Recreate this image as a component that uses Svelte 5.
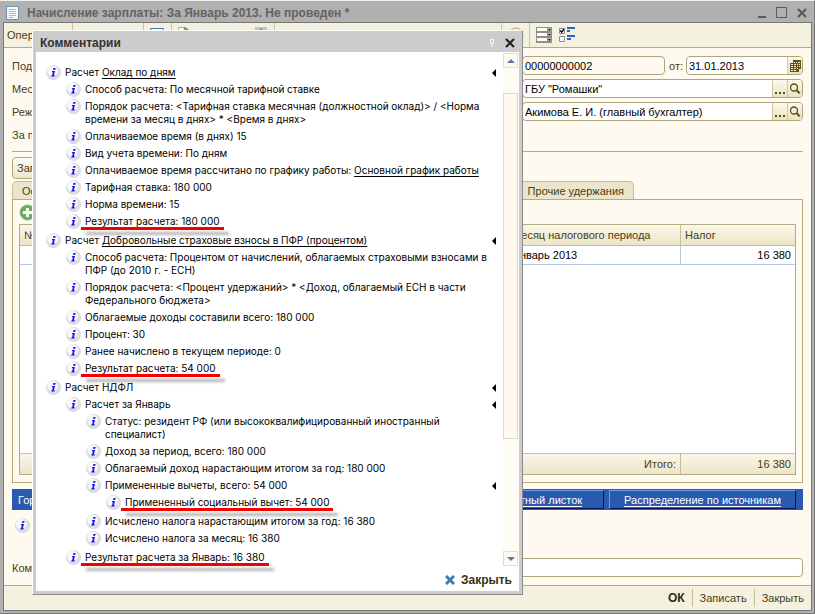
<script lang="ts">
  type Item = { text: string; link?: string; mark?: boolean; children?: Item[] };

  const items: Item[] = [
    {
      text: 'Расчет', link: 'Оклад по дням', children: [
        { text: 'Способ расчета: По месячной тарифной ставке' },
        { text: 'Порядок расчета: <Тарифная ставка месячная (должностной оклад)> / <Норма времени за месяц в днях> * <Время в днях>' },
        { text: 'Оплачиваемое время (в днях) 15' },
        { text: 'Вид учета времени: По дням' },
        { text: 'Оплачиваемое время рассчитано по графику работы:', link: 'Основной график работы' },
        { text: 'Тарифная ставка: 180 000' },
        { text: 'Норма времени: 15' },
        { text: 'Результат расчета: 180 000', mark: true }
      ]
    },
    {
      text: 'Расчет', link: 'Добровольные страховые взносы в ПФР (процентом)', children: [
        { text: 'Способ расчета: Процентом от начислений, облагаемых страховыми взносами в ПФР (до 2010 г. - ЕСН)' },
        { text: 'Порядок расчета: <Процент удержаний> * <Доход, облагаемый ЕСН в части Федерального бюджета>' },
        { text: 'Облагаемые доходы составили всего: 180 000' },
        { text: 'Процент: 30' },
        { text: 'Ранее начислено в текущем периоде: 0' },
        { text: 'Результат расчета: 54 000', mark: true }
      ]
    },
    {
      text: 'Расчет НДФЛ', children: [
        {
          text: 'Расчет за Январь', children: [
            { text: 'Статус: резидент РФ (или высококвалифицированный иностранный специалист)' },
            { text: 'Доход за период, всего: 180 000' },
            { text: 'Облагаемый доход нарастающим итогом за год: 180 000' },
            {
              text: 'Примененные вычеты, всего: 54 000', children: [
                { text: 'Примененный социальный вычет: 54 000', mark: true }
              ]
            },
            { text: 'Исчислено налога нарастающим итогом за год: 16 380' },
            { text: 'Исчислено налога за месяц: 16 380' }
          ]
        },
        { text: 'Результат расчета за Январь: 16 380', mark: true }
      ]
    }
  ];
</script>

{#snippet info()}
  <svg class="info" viewBox="0 0 15 15" aria-hidden="true">
    <circle cx="7.5" cy="7.5" r="7" fill="#dfdfe3" stroke="#d8d8dc" />
    <circle cx="6.4" cy="6" r="5.4" fill="#f8f8f9" />
    <path d="M7.4 3h2.3l-.5 1.8H6.9zM5.8 5.9H9L7.9 10.2h.9l-.3 1.3H5.2l.3-1.3h.6l.8-3h-.7z" fill="#1414f4" />
  </svg>
{/snippet}

{#snippet tree(list: Item[])}
  <ul>
    {#each list as item}
      <li>
        <div class="node">
          {@render info()}
          <span class="node-text">
            <span class:marked={item.mark}>{item.text}</span>
            {#if item.link}<a href="#details">{item.link}</a>{/if}
          </span>
          {#if item.children}
            <button class="fold" aria-label="Свернуть">
              <svg viewBox="0 0 4 8" width="4" height="8"><path d="M4 0v8L0 4z" fill="#000" /></svg>
            </button>
          {/if}
        </div>
        {#if item.children}{@render tree(item.children)}{/if}
      </li>
    {/each}
  </ul>
{/snippet}

{#snippet lens()}
  <svg viewBox="0 0 12 12" width="12" height="12"><circle cx="5" cy="4.5" r="3.5" fill="none" stroke="#5d4c0b" stroke-width="1.3" /><path d="M7.5 7l3.2 3.4" stroke="#5d4c0b" stroke-width="2" /></svg>
{/snippet}

{#snippet dots()}
  <svg viewBox="0 0 11 12" width="11" height="12"><path d="M0 9h2v2H0zM4 9h2v2H4zM8 9h2v2H8z" fill="#5d4c0b" /></svg>
{/snippet}

<div class="window">
  <header class="titlebar">
    <svg width="13" height="14" viewBox="0 0 13 14" aria-hidden="true"><path d="M.5.5h12v13H.5z" fill="#f5fafd" stroke="#6f93ad" /><path d="M3 3.5h7M3 5.5h7M3 7.5h7M3 9.5h7M3 11.5h4" stroke="#a5bccc" /></svg>
    <h1>Начисление зарплаты: За Январь 2013. Не проведен *</h1>
    <button aria-label="Свернуть окно"><svg width="12" height="12" viewBox="0 0 12 12"><path d="M2 10h8" stroke="#595959" stroke-width="2" /></svg></button>
    <button aria-label="Развернуть окно"><svg width="12" height="12" viewBox="0 0 12 12"><path d="M.5.5h10v10H.5z" fill="none" stroke="#595959" /></svg></button>
    <button aria-label="Закрыть окно"><svg width="12" height="12" viewBox="0 0 12 12"><path d="M2 2l8 8M10 2l-8 8" stroke="#595959" stroke-width="2.2" /></svg></button>
  </header>

  <main>
    <div class="toolbar">
      <div class="group first"><button>Опер</button></div>
      <div class="group second"></div>
      <div class="group third"><svg width="14" height="14" viewBox="0 0 14 14"><path d="M.5 1.5h13v12H.5z" fill="#eef6ff" stroke="#4d79a8" /></svg></div>
      <div class="group fourth">
        <svg width="14" height="14" viewBox="0 0 14 14"><path d="M.5.5h8l4 4v9H.5z" fill="#fff" stroke="#a3aea3" /><path d="M6 1l4 3" fill="none" stroke="#3f9a3f" stroke-width="2" /></svg>
        <svg width="14" height="14" viewBox="0 0 14 14"><path d="M1 0h12v13H1z" fill="#c5c2b8" /><path d="M7 1l3 4H4z" fill="#8e8b83" /></svg>
      </div>
      <div class="group fifth"></div>
      <div class="group sixth"><svg width="16" height="16" viewBox="0 0 16 16"><circle cx="8" cy="8" r="7" fill="#f7e9dc" stroke="#d5a27c" /></svg></div>
      <div class="group last">
        <svg width="16" height="16" viewBox="0 0 16 16" aria-hidden="true">
          <path d="M0 0h16v16H0z" fill="#8f8f8f" /><path d="M1 1h10v3H1zM1 6h10v3H1zM1 11h10v3H1z" fill="#fff" /><path d="M12 1h3v3h-3zM12 6h3v3h-3zM12 11h3v3h-3z" fill="#bbb" /><path d="M12 2h3l-1.5 2zM12 7h3l-1.5 2zM12 12h3l-1.5 2z" fill="#222" />
        </svg>
        <svg width="16" height="16" viewBox="0 0 16 16" aria-hidden="true">
          <path d="M.5 1.5h5v5h-5zM.5 9.5h5v5h-5z" fill="#fff" stroke="#8d8d8d" /><path d="M1.3 3.5l1.4 1.6 2.3-3" fill="none" stroke="#000" stroke-width="1.4" /><path d="M8 1h8M8 4h3M8 9h8M8 12h4" stroke="#2b62cf" stroke-width="2" />
        </svg>
      </div>
    </div>

    <div class="content">
      <div class="form">
        <div class="row">
          <span class="caption">Под</span>
          <div class="fields">
            <div class="field number"><input aria-label="Номер" value="00000000002" /></div>
            <label for="date">от:</label>
            <div class="field grow">
              <input id="date" value="31.01.2013" />
              <button aria-label="Календарь"><svg width="11" height="12" viewBox="0 0 11 12"><path d="M3 0h8v9H9v3H0V3h3z" fill="#66530f" /><path d="M4 2h1v1H4zM6 2h1v1H6zM8 2h2v1H8zM1 4h2v1H1zM4 4h2v1H4zM7 4h1v1H7zM9 4h1v1H9zM1 6h2v1H1zM4 6h2v1H4zM7 6h1v1H7zM9 6h1v1H9zM1 8h2v1H1zM4 8h2v1H4zM7 8h1v1H7zM1 10h2v1H1zM4 10h2v1H4z" fill="#f6f0d8" /></svg></button>
            </div>
          </div>
        </div>
        <div class="row">
          <label class="caption" for="org">Мес</label>
          <div class="fields"><div class="field grow">
            <input id="org" value={'ГБУ "Ромашки"'} />
            <button aria-label="Выбрать">{@render dots()}</button><button aria-label="Открыть">{@render lens()}</button>
          </div></div>
        </div>
        <div class="row">
          <label class="caption" for="resp">Реж</label>
          <div class="fields"><div class="field grow">
            <input id="resp" value="Акимова Е. И. (главный бухгалтер)" />
            <button aria-label="Выбрать">{@render dots()}</button><button aria-label="Открыть">{@render lens()}</button>
          </div></div>
        </div>
        <div class="row"><span class="caption">За п</span></div>
      </div>

      <div class="actions"><button>Зап</button></div>

      <div class="tabs"><button>Ос</button><button>Прочие удержания</button></div>
      <section class="panel">
        <div class="panel-tools">
          <button aria-label="Добавить"><svg width="17" height="17" viewBox="0 0 17 17"><circle cx="8.5" cy="8.5" r="7.5" fill="#66b25c" stroke="#9aa59a" /><path d="M8.5 4v9M4 8.5h9" stroke="#fff" stroke-width="3" /></svg></button>
        </div>
        <div class="table-box">
          <table>
            <thead><tr><th class="num">№</th><th></th><th class="month">Месяц налогового периода</th><th class="tax">Налог</th></tr></thead>
            <tbody>
              <tr class="entry"><td></td><td></td><td>Январь 2013</td><td class="right">16 380</td></tr>
              <tr class="rest"><td colspan="4"></td></tr>
            </tbody>
            <tfoot><tr><td colspan="3" class="right">Итого:</td><td class="right">16 380</td></tr></tfoot>
          </table>
        </div>
      </section>

      <div class="bluebar">
        <span>Гор</span>
        <a href="#slip">Расчетный листок</a>
        <a href="#sources">Распределение по источникам</a>
      </div>
      <div class="hint">{@render info()}</div>
      <div class="row comment">
        <label for="comment">Ком</label>
        <div class="field grow"><input id="comment" /></div>
      </div>
    </div>

    <footer>
      <button class="ok">ОК</button>
      <button>Записать</button>
      <button>Закрыть</button>
    </footer>
  </main>

  <div class="dialog" role="dialog" aria-labelledby="dialog-title">
    <div class="dialog-title">
      <h2 id="dialog-title">Комментарии</h2>
      <svg width="4" height="8" viewBox="0 0 4 8" aria-hidden="true"><path d="M.5.5h3v4h-3zM2 5v3" fill="none" stroke="#f6f6f6" /></svg>
      <button aria-label="Закрыть комментарии"><svg width="10" height="10" viewBox="0 0 10 10"><path d="M1 1l8 8M9 1L1 9" stroke="#222" stroke-width="2.2" /></svg></button>
    </div>
    <div class="dialog-body">
      <div class="tree">{@render tree(items)}</div>
      <div class="scroll">
        <button aria-label="Вверх"><svg width="8" height="4" viewBox="0 0 8 4"><path d="M0 4l4-4 4 4z" fill="#5d7ba2" /></svg></button>
        <div class="track"><div class="thumb"></div></div>
        <button aria-label="Вниз"><svg width="8" height="4" viewBox="0 0 8 4"><path d="M0 0l4 4 4-4z" fill="#5d7ba2" /></svg></button>
      </div>
    </div>
    <div class="dialog-foot">
      <button>
        <svg width="10" height="10" viewBox="0 0 10 10" aria-hidden="true"><path d="M1 1l8 8M9 1L1 9" stroke="#3e80ae" stroke-width="3" /></svg>
        Закрыть
      </button>
    </div>
  </div>
</div>

<style>
  :global(body) { margin: 0; }
  .window, .window * { box-sizing: border-box; }
  .window {
    position: relative;
    display: flex;
    flex-direction: column;
    min-height: 100vh;
    padding: 1px 2px 2px 3px;
    background: #b0b0b0;
    border-right: 1px solid #777;
    border-bottom: 1px solid #777;
    border-top: 1px solid #eef1ee;
    font-family: "Liberation Sans", Arial, sans-serif;
    font-size: 11px;
    line-height: 16px;
    color: #4a3c14;
  }
  button, input { font: inherit; color: inherit; }
  button { padding: 0; border: 0; background: none; }
  svg { display: block; flex: none; }
  h1, h2 { margin: 0; font-size: 12px; font-weight: bold; white-space: nowrap; }

  .titlebar { display: flex; align-items: center; gap: 8px; height: 20px; padding: 2px 4px 0 3px; }
  .titlebar h1 { flex: 1; color: #636363; }

  main {
    flex: 1;
    display: flex;
    flex-direction: column;
    border: 1px solid #777;
    background: #fefaf0;
  }
  .toolbar { display: flex; height: 25px; background: #f4f1de; border-bottom: 1px solid #b5ab82; }
  .group { display: flex; align-items: flex-start; justify-content: space-between; padding: 4px 6px; border-right: 1px solid #cdc6a6; }
  .first { width: 69px; padding: 4px 3px; }
  .second { width: 71px; }
  .third { width: 28px; }
  .fourth { width: 103px; }
  .fifth { width: 227px; }
  .sixth { width: 28px; }
  .last { flex: 1; justify-content: flex-start; gap: 7px; border: 0; }

  .content { flex: 1; display: flex; flex-direction: column; padding: 8px; }
  .form { display: flex; flex-direction: column; gap: 4px; padding-bottom: 7px; border-bottom: 1px solid #b5ab82; }
  .row { display: flex; align-items: center; height: 19px; }
  .caption { flex: 1; white-space: nowrap; }
  .fields { display: flex; align-items: center; gap: 4px; width: 281px; }
  .fields label { width: 13px; white-space: nowrap; }
  .field { display: flex; height: 19px; min-width: 0; border: 1px solid #b0a67a; border-radius: 4px; background: #fff; overflow: hidden; }
  .field input { flex: 1; min-width: 0; width: 0; padding: 0 2px; border: 0; outline: 0; background: none; color: #000; }
  .field button { display: flex; justify-content: center; align-items: center; width: 15px; border-left: 1px solid #cfc8a4; background: linear-gradient(#fbf9ee, #e9e2c4); }
  .number { width: 143px; background: #fefaf0; }
  .grow { flex: 1; }

  .actions { display: flex; padding: 5px 0 2px; }
  .actions button { height: 22px; padding: 0 4px; border: 1px solid #b0a67a; border-radius: 4px; background: linear-gradient(#fefdf6, #ece6cd); }
  .tabs { display: flex; justify-content: space-between; padding-right: 169px; }
  .tabs button { height: 18px; padding: 0 9px; border: 1px solid #c5bd97; border-bottom: 0; border-radius: 5px 5px 0 0; background: #ebe5cc; white-space: nowrap; }

  .panel { flex: 1; display: flex; flex-direction: column; padding: 0 6px 7px; border: 1px solid #b5ab82; }
  .panel-tools { display: flex; align-items: center; height: 24px; }
  .table-box { flex: 1; display: grid; border: 1px solid #b5ab82; background: #fff; }
  table { width: 100%; border-collapse: separate; border-spacing: 0; table-layout: fixed; }
  th, td { padding: 0 4px; text-align: left; font-weight: normal; white-space: nowrap; }
  thead th, tfoot td { height: 21px; background: linear-gradient(#faf7e9, #ece5c8); border-right: 1px solid #c5bd97; }
  thead th { border-bottom: 1px solid #c5bd97; }
  tfoot td { border-top: 1px solid #c5c2b0; }
  th:last-child, td:last-child { border-right: 0; }
  .num { width: 40px; }
  .month { width: 173px; }
  .tax { width: 114px; }
  .entry td { height: 19px; border-bottom: 1px solid #b4c9e8; border-right: 1px solid #b4c9e8; color: #000; }
  .entry td:last-child { border-right: 0; }
  .rest { height: 100%; }
  .right { text-align: right; }

  .bluebar { display: flex; align-items: center; gap: 5px; height: 21px; margin-top: 6px; padding: 0 7px 0 6px; background: #2a59b0; color: #fff; }
  .bluebar span { flex: 1; }
  .bluebar a { min-width: 136px; height: 19px; padding: 0 14px; border: 1px solid; border-color: #6f9cf0 #0a1266 #0a1266 #6f9cf0; color: #fff; line-height: 18px; text-align: center; text-underline-offset: 2px; }
  .hint { display: flex; height: 48px; padding: 8px 3px; }
  .comment { gap: 8px; }

  footer { display: flex; justify-content: flex-end; align-items: center; height: 25px; border-top: 1px solid #b5ab82; background: #f4f1de; }
  footer button { height: 18px; padding: 0 7px; border-left: 1px solid #c5bd97; }
  footer .ok { border: 0; font-size: 12px; font-weight: bold; color: #33290c; }

  .dialog {
    position: absolute;
    left: 32px;
    top: 29px;
    display: flex;
    flex-direction: column;
    width: 491px;
    max-width: calc(100% - 40px);
    border: 1px solid;
    border-color: #fff #8b8b8b #8b8b8b #fff;
    background: #ccc;
    padding: 0 3px 3px;
  }
  .dialog-title { display: flex; align-items: center; height: 21px; padding: 2px 4px 0; color: #333; }
  .dialog-title h2 { flex: 1; }
  .dialog-title button { margin-left: 11px; }
  .dialog-body { display: flex; background: #fff; padding-top: 1px; }
  .tree { flex: 1; padding: 11px 7px 0 10px; font-family: Inter, "Liberation Sans", sans-serif; font-size: 10px; line-height: 13px; color: #000; }
  ul { list-style: none; margin: 0; padding: 0; }
  ul ul { padding: 0 0 2px 20px; }
  .tree > ul > li:last-child > ul { padding-bottom: 0; }
  .node { display: flex; align-items: flex-start; gap: 4px; padding: 2px 0; }
  .node > .info { margin: -1px 0; }
  .info { width: 15px; height: 15px; }
  .node-text { flex: 1; }
  .tree a { color: #000; text-underline-offset: 2px; }
  .fold { display: flex; align-items: center; height: 13px; }
  .marked { position: relative; }
  .marked::after {
    content: "";
    position: absolute;
    left: -4px;
    right: -4px;
    bottom: -3px;
    height: 3px;
    background: #f40000;
    box-shadow: 5px 5px 3px rgba(0, 0, 0, 0.3);
  }
  .scroll { display: flex; flex-direction: column; width: 16px; background: #fefcf5; }
  .scroll button { display: flex; align-items: center; justify-content: center; width: 15px; height: 15px; border: 1px solid #e3dfc9; background: #fefaf0; }
  .track { flex: 1; padding: 25px 0 112px; }
  .thumb { width: 15px; height: 100%; border: 1px solid #dedac4; background: #fefaf0; }
  .dialog-foot { display: flex; justify-content: flex-end; padding: 5px 7px 2px; background: #fff; }
  .dialog-foot button { display: flex; align-items: center; gap: 6px; height: 18px; font-size: 12px; font-weight: bold; color: #3d3214; }
</style>
